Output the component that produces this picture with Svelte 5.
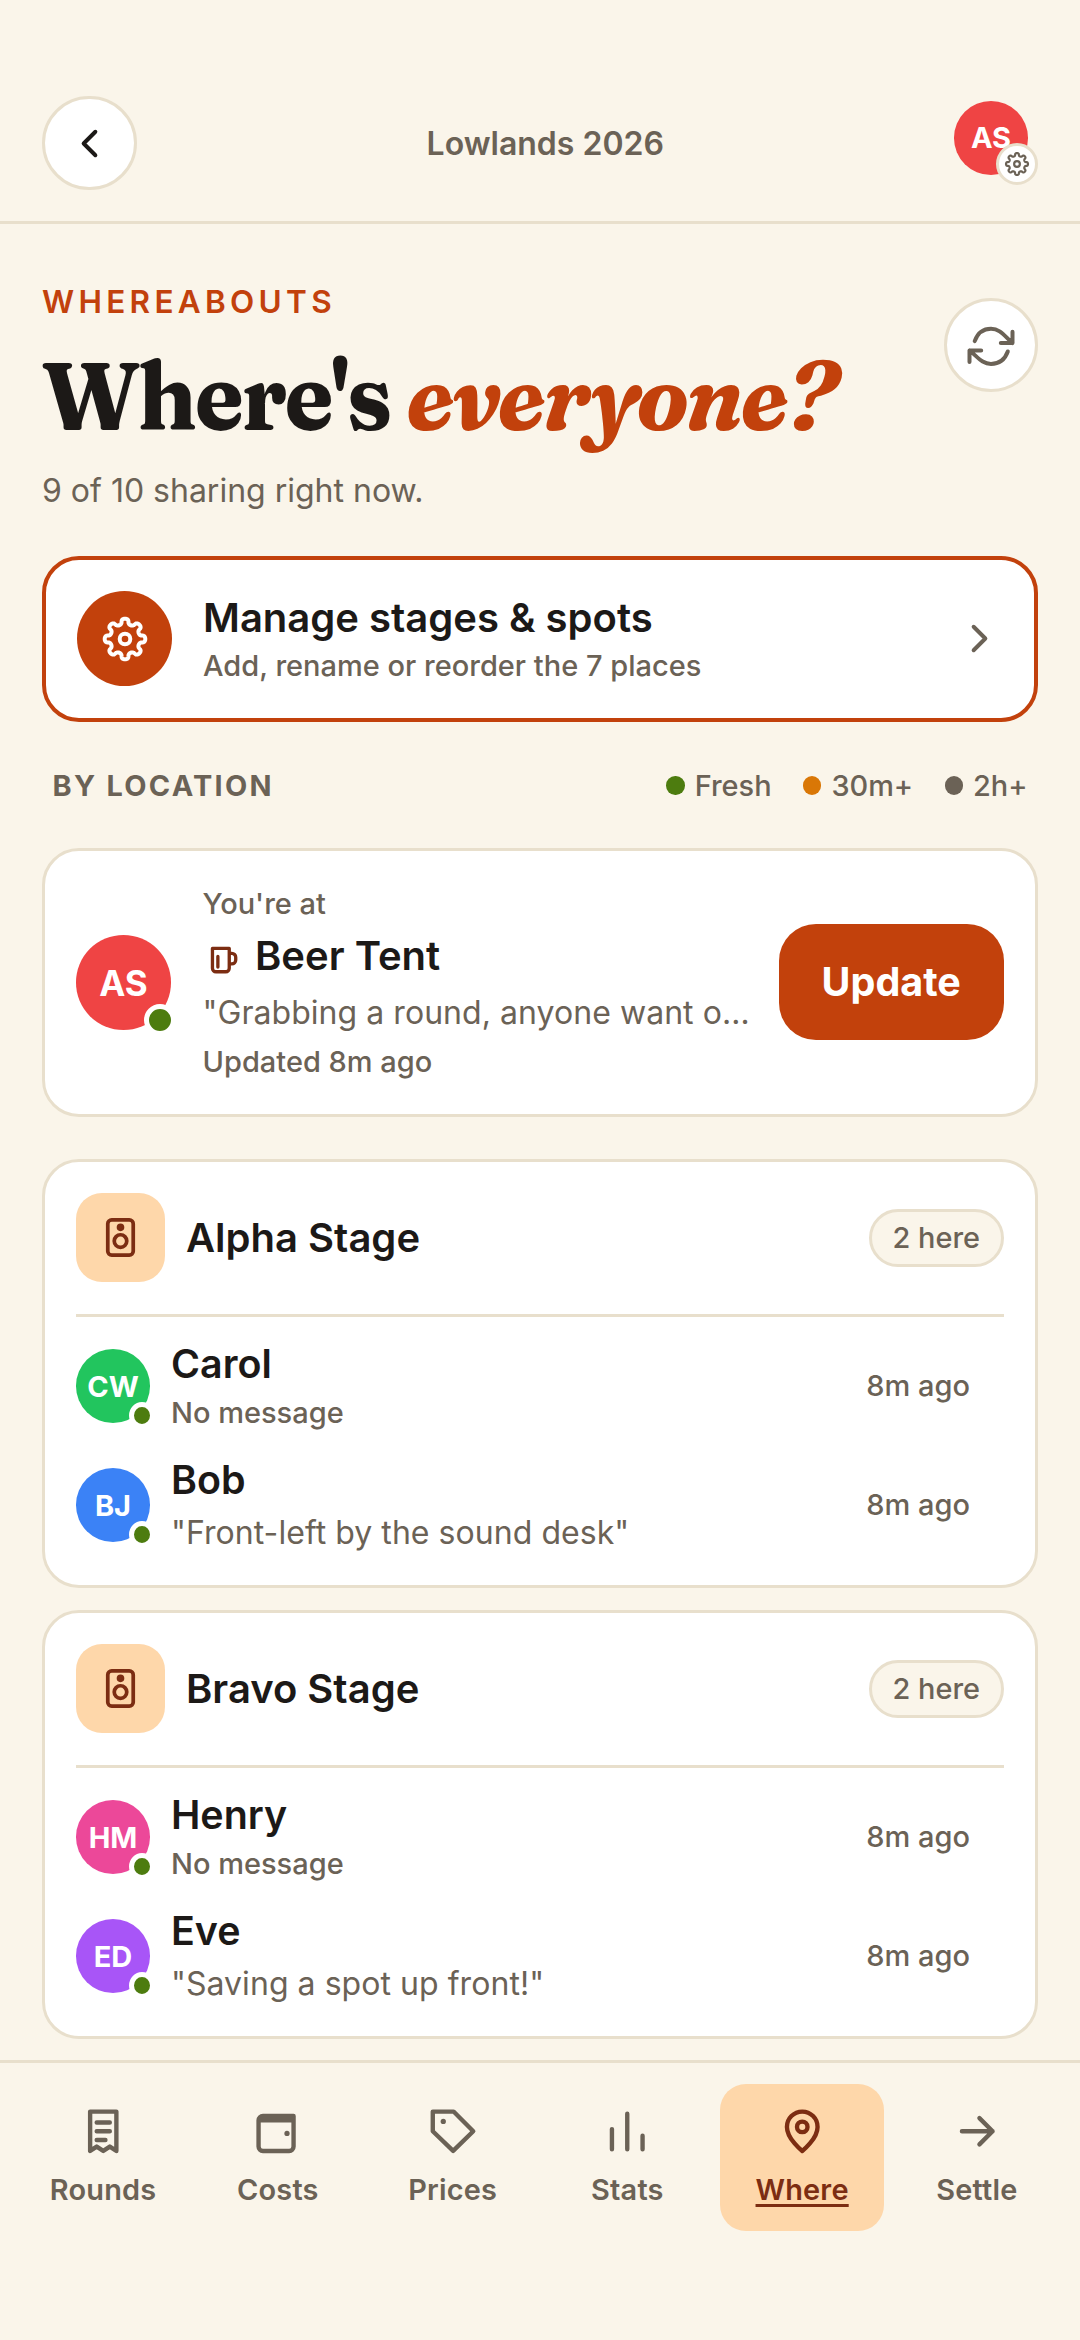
<script lang="ts">
	type Person = { name: string; initials: string; color: string; message?: string };
	type Stage = { name: string; people: Person[] };

	const legend = [
		{ label: 'Fresh', color: '#4d7c0f' },
		{ label: '30m+', color: '#d97706' },
		{ label: '2h+', color: '#6b6256' }
	];

	const stages: Stage[] = [
		{
			name: 'Alpha Stage',
			people: [
				{ name: 'Carol', initials: 'CW', color: '#22c55e' },
				{ name: 'Bob', initials: 'BJ', color: '#3b82f6', message: 'Front-left by the sound desk' }
			]
		},
		{
			name: 'Bravo Stage',
			people: [
				{ name: 'Henry', initials: 'HM', color: '#ec4899' },
				{ name: 'Eve', initials: 'ED', color: '#a855f7', message: 'Saving a spot up front!' }
			]
		}
	];

	const tabs = ['Rounds', 'Costs', 'Prices', 'Stats', 'Where', 'Settle'];
	let active = $state('Where');

	// eight rounded teeth, walls steepened by bending the angle
	const gear =
		Array.from({ length: 192 }, (_, i) => {
			const t = (i / 192) * Math.PI * 2;
			const a = t + 0.045 * Math.sin(16 * t);
			const r = 17.6 + 2.7 * Math.cos(8 * t);
			return `${i ? 'L' : 'M'}${(r * Math.sin(a)).toFixed(2)} ${(-r * Math.cos(a)).toFixed(2)}`;
		}).join('') + 'Z';
</script>

{#snippet gearIcon(size: number)}
	<svg width={size} height={size} viewBox="-24 -24 48 48" stroke-width="4">
		<path d={gear} />
		<circle r="5.3" />
	</svg>
{/snippet}

<div class="screen">
	<header>
		<button class="round" aria-label="Back">
			<svg class="ink" width="47" height="47" viewBox="0 0 24 24"><path d="M15 6l-6 6 6 6" /></svg>
		</button>
		<span class="trip">Lowlands 2026</span>
		<div class="profile">
			<span class="avatar" style:background="#ef4444">AS</span>
			<span class="badge">{@render gearIcon(26)}</span>
		</div>
	</header>

	<main>
		<div class="intro">
			<div>
				<p class="eyebrow">WHEREABOUTS</p>
				<h1>Where's <em>everyone?</em></h1>
				<p class="lead">9 of 10 sharing right now.</p>
			</div>
			<button class="round refresh" aria-label="Refresh">
				<svg width="56" height="56" viewBox="-28 -29.3 56 56" stroke-width="4">
					<path d="M-16.3 -5.2C-13.5 -13 -7.5 -17.6 0 -17.6C9 -17.6 13 -10.8 21.5 -3.2M21.5 -14.6V-3.2H9.8" />
					<path d="M16.8 5.2C14 13 8 17.6 0 17.6C-9 17.6 -13 10.8 -21.5 4.2M-21.5 15.6V4.2H-9.8" />
				</svg>
			</button>
		</div>

		<button class="card manage">
			<span class="cog">{@render gearIcon(48)}</span>
			<span class="text">
				<span class="name">Manage stages &amp; spots</span>
				<span class="small">Add, rename or reorder the 7 places</span>
			</span>
			<svg width="47" height="47" viewBox="0 0 24 24"><path d="M9 6l6 6-6 6" /></svg>
		</button>

		<div class="by">
			<h2>BY LOCATION</h2>
			<div class="legend">
				{#each legend as item}
					<span class="key"><i style:background={item.color}></i>{item.label}</span>
				{/each}
			</div>
		</div>

		<section class="card you">
			<span class="avatar big" style:background="#ef4444">AS<i></i></span>
			<div class="text">
				<span class="small">You're at</span>
				<span class="name place">
					<svg class="brown" width="42" height="42" viewBox="0 0 24 24">
						<path d="M5.4 5.4H15v11.3a2 2 0 0 1-2 2H7.4a2 2 0 0 1-2-2zM15 8.2h1.5a2.2 2.2 0 0 1 2.2 2.2v1.6a2.2 2.2 0 0 1-2.2 2.2H15M8.5 10v6" />
					</svg>
					Beer Tent
				</span>
				<span class="quote">"Grabbing a round, anyone want one?"</span>
				<span class="small">Updated 8m ago</span>
			</div>
			<button class="update">Update</button>
		</section>

		{#each stages as stage}
			<section class="card stage">
				<div class="top">
					<span class="tile">
						<svg class="brown" width="47" height="47" viewBox="0 0 24 24">
							<rect x="5.5" y="3" width="13" height="18" rx="2" />
							<circle cx="12" cy="6.8" r="1" />
							<circle cx="12" cy="13.8" r="3.2" />
						</svg>
					</span>
					<span class="name">{stage.name}</span>
					<span class="count">{stage.people.length} here</span>
				</div>
				{#each stage.people as person}
					<div class="person">
						<span class="avatar" style:background={person.color}>{person.initials}<i></i></span>
						<div class="text">
							<span class="name">{person.name}</span>
							{#if person.message}
								<span class="quote">"{person.message}"</span>
							{:else}
								<span class="small">No message</span>
							{/if}
						</div>
						<span class="small ago">8m ago</span>
					</div>
				{/each}
			</section>
		{/each}
	</main>

	<nav>
		{#each tabs as tab}
			<button class:active={active === tab} onclick={() => (active = tab)}>
				<svg width="52.5" height="52.5" viewBox="0 0 24 24">
					{#if tab === 'Rounds'}
						<path d="M6 3h12v18l-3-2-3 2-3-2-3 2zM9 8h6M9 12h6M9 16h4" />
					{:else if tab === 'Costs'}
						<path d="M3 7a2 2 0 0 1 2-2h14v2M3 7v12a2 2 0 0 0 2 2h12a2 2 0 0 0 2-2V7z" />
						<circle class="dot" cx="16" cy="13" r="1.2" />
					{:else if tab === 'Prices'}
						<path d="M3.1 3h9.5l9 9-9.2 9L3.1 12z" />
						<circle class="dot" cx="7.9" cy="7.5" r="1.2" />
					{:else if tab === 'Stats'}
						<path d="M5 11v9.2M12 4v16.2M19 14v6.2" />
					{:else if tab === 'Where'}
						<path d="M12 21s7-5.5 7-11a7 7 0 0 0-14 0c0 5.5 7 11 7 11z" />
						<circle cx="12" cy="10" r="2.4" />
					{:else}
						<path d="M5 12h14M13 6l6 6-6 6" />
					{/if}
				</svg>
				<span>{tab}</span>
			</button>
		{/each}
	</nav>
</div>

<style>
	:global(body) {
		margin: 0;
		background: #faf5ea;
	}

	.screen {
		--bg: #faf5ea;
		--line: #e8dfcc;
		--ink: #1c1917;
		--muted: #6b6256;
		--rust: #c2410c;
		--peach: #fed7aa;
		--brown: #7c2d12;
		display: flex;
		flex-direction: column;
		width: 1080px;
		height: 2340px;
		overflow: hidden;
		background: var(--bg);
		color: var(--ink);
		font-family: Inter, 'Liberation Sans', sans-serif;
	}

	* {
		box-sizing: border-box;
	}

	p,
	h1,
	h2 {
		margin: 0;
	}

	button {
		padding: 0;
		border: 0;
		background: none;
		font: inherit;
		color: inherit;
		text-align: start;
	}

	svg {
		flex: none;
		display: block;
		fill: none;
		stroke: var(--muted);
		stroke-width: 2;
		stroke-linecap: round;
		stroke-linejoin: round;
	}

	svg[stroke-width='4'] {
		stroke-width: 4;
	}

	.ink {
		stroke: var(--ink);
	}

	.brown {
		stroke: var(--brown);
		stroke-width: 1.9;
	}

	header {
		flex: none;
		display: flex;
		align-items: center;
		justify-content: space-between;
		height: 224px;
		padding: 96px 42px 31px;
		border-bottom: 3px solid var(--line);
	}

	.round {
		flex: none;
		display: flex;
		align-items: center;
		justify-content: center;
		width: 94.5px;
		height: 94.5px;
		border: 3px solid var(--line);
		border-radius: 50%;
		background: #fff;
	}

	.trip {
		font-size: 32px;
		font-weight: 600;
		color: var(--muted);
	}

	.profile {
		position: relative;
		width: 84px;
		height: 84px;
	}

	.badge {
		position: absolute;
		right: 0;
		bottom: 0;
		display: flex;
		align-items: center;
		justify-content: center;
		width: 42px;
		height: 42px;
		border: 3px solid var(--line);
		border-radius: 50%;
		background: #fff;
	}

	.avatar {
		position: relative;
		flex: none;
		display: flex;
		align-items: center;
		justify-content: center;
		width: 74px;
		height: 73.5px;
		border-radius: 50%;
		font-size: 29px;
		font-weight: 700;
		color: #fff;
	}

	.avatar i {
		position: absolute;
		right: -5px;
		bottom: -6.5px;
		width: 26px;
		height: 27px;
		border: 5px solid #fff;
		border-radius: 50%;
		background: #4d7c0f;
	}

	.avatar.big {
		width: 95px;
		height: 94.5px;
		font-size: 35px;
	}

	.big i {
		bottom: -6px;
		width: 32px;
		height: 32px;
	}

	main {
		flex: 1;
		min-height: 0;
		padding: 57.5px 42px 0;
		overflow: hidden;
	}

	.intro {
		display: flex;
		justify-content: space-between;
		margin-bottom: 42.5px;
	}

	.eyebrow {
		font-size: 31.5px;
		line-height: 40px;
		font-weight: 600;
		letter-spacing: 4.3px;
		color: var(--rust);
	}

	h1 {
		margin: 24px 0 23.5px;
		font-family: Fraunces, 'Liberation Serif', serif;
		font-size: 94.5px;
		line-height: 100px;
		font-weight: 700;
		letter-spacing: -2.6px;
		white-space: nowrap;
		/* narrower display cut */
		transform: scaleX(0.949);
		transform-origin: left;
	}

	em {
		color: var(--rust);
	}

	.lead {
		font-size: 32px;
		line-height: 44px;
		color: var(--muted);
	}

	.refresh {
		margin-top: 16px;
	}

	.card {
		display: flex;
		width: 100%;
		border: 3px solid var(--line);
		border-radius: 37px;
		background: #fff;
	}

	.manage {
		align-items: center;
		gap: 31px;
		height: 166.5px;
		padding: 0 31.5px 0 31px;
		border: 4px solid var(--rust);
	}

	.cog {
		flex: none;
		display: flex;
		align-items: center;
		justify-content: center;
		width: 95px;
		height: 95px;
		border-radius: 50%;
		background: var(--rust);
	}

	.cog :global(svg) {
		stroke: #fff;
	}

	.text {
		flex: 1;
		min-width: 0;
		display: flex;
		flex-direction: column;
		padding-top: 2px;
	}

	.name {
		font-size: 40px;
		line-height: 53px;
		font-weight: 600;
	}

	.small {
		font-size: 29px;
		line-height: 44.6px;
		font-weight: 500;
		color: var(--muted);
	}

	.quote {
		overflow: hidden;
		font-size: 32px;
		line-height: 51px;
		letter-spacing: 0.05px;
		color: var(--muted);
		text-overflow: ellipsis;
		white-space: nowrap;
	}

	.by {
		display: flex;
		align-items: center;
		justify-content: space-between;
		height: 44px;
		margin: 41.5px 10.5px 40.5px;
	}

	h2 {
		font-size: 28.9px;
		font-weight: 700;
		letter-spacing: 2.3px;
		color: var(--muted);
	}

	.legend {
		display: flex;
		gap: 31.5px;
		font-size: 28.9px;
		font-weight: 500;
		color: var(--muted);
	}

	.key {
		display: flex;
		align-items: center;
		gap: 10px;
	}

	.key i {
		width: 18.4px;
		height: 18.4px;
		border-radius: 50%;
	}

	.you {
		align-items: center;
		gap: 31.5px;
		height: 269px;
		margin-bottom: 42px;
		padding: 0 31px;
	}

	.place {
		display: flex;
		align-items: center;
		gap: 10.5px;
		line-height: 58.4px;
	}

	.place svg {
		margin-top: 8px;
	}

	.you .quote {
		margin-right: -6px;
		line-height: 55px;
	}

	.update {
		width: 225.5px;
		height: 116px;
		margin-bottom: 1px;
		border-radius: 37px;
		background: var(--rust);
		font-size: 39.5px;
		font-weight: 700;
		text-align: center;
		color: #fff;
	}

	.stage {
		flex-direction: column;
		height: 428.7px;
		margin-bottom: 22.5px;
		padding: 31px 31px 0;
	}

	.top {
		display: flex;
		align-items: center;
		gap: 21px;
		margin-bottom: 9.5px;
		padding-bottom: 32px;
		border-bottom: 3px solid var(--line);
	}

	.tile {
		display: flex;
		align-items: center;
		justify-content: center;
		width: 89px;
		height: 89px;
		border-radius: 26px;
		background: var(--peach);
	}

	.top .name {
		flex: 1;
	}

	.count {
		padding: 0 21px;
		border: 3px solid var(--line);
		border-radius: 29px;
		background: var(--bg);
		font-size: 28.9px;
		line-height: 52px;
		font-weight: 500;
		color: var(--muted);
	}

	.person {
		display: flex;
		align-items: center;
		gap: 21px;
		height: 119px;
	}

	.person .name {
		font-size: 39.4px;
	}

	.ago {
		margin-right: 34px;
	}

	nav {
		flex: none;
		display: flex;
		gap: 10.5px;
		height: 280px;
		padding: 21px 21px 0;
		border-top: 3px solid var(--line);
	}

	nav button {
		flex: 1;
		display: flex;
		flex-direction: column;
		align-items: center;
		gap: 14.5px;
		height: 147px;
		padding-top: 21px;
		border-radius: 26px;
		font-size: 28.9px;
		line-height: 35px;
		font-weight: 600;
		letter-spacing: 0.2px;
		color: var(--muted);
	}

	nav .active {
		background: var(--peach);
		color: var(--brown);
	}

	nav .active svg {
		stroke: var(--brown);
	}

	nav .active span {
		text-decoration: underline;
		text-decoration-thickness: 2.6px;
		text-underline-offset: 4px;
		text-decoration-skip-ink: none;
	}

	.dot {
		stroke: none;
		fill: var(--muted);
	}
</style>
